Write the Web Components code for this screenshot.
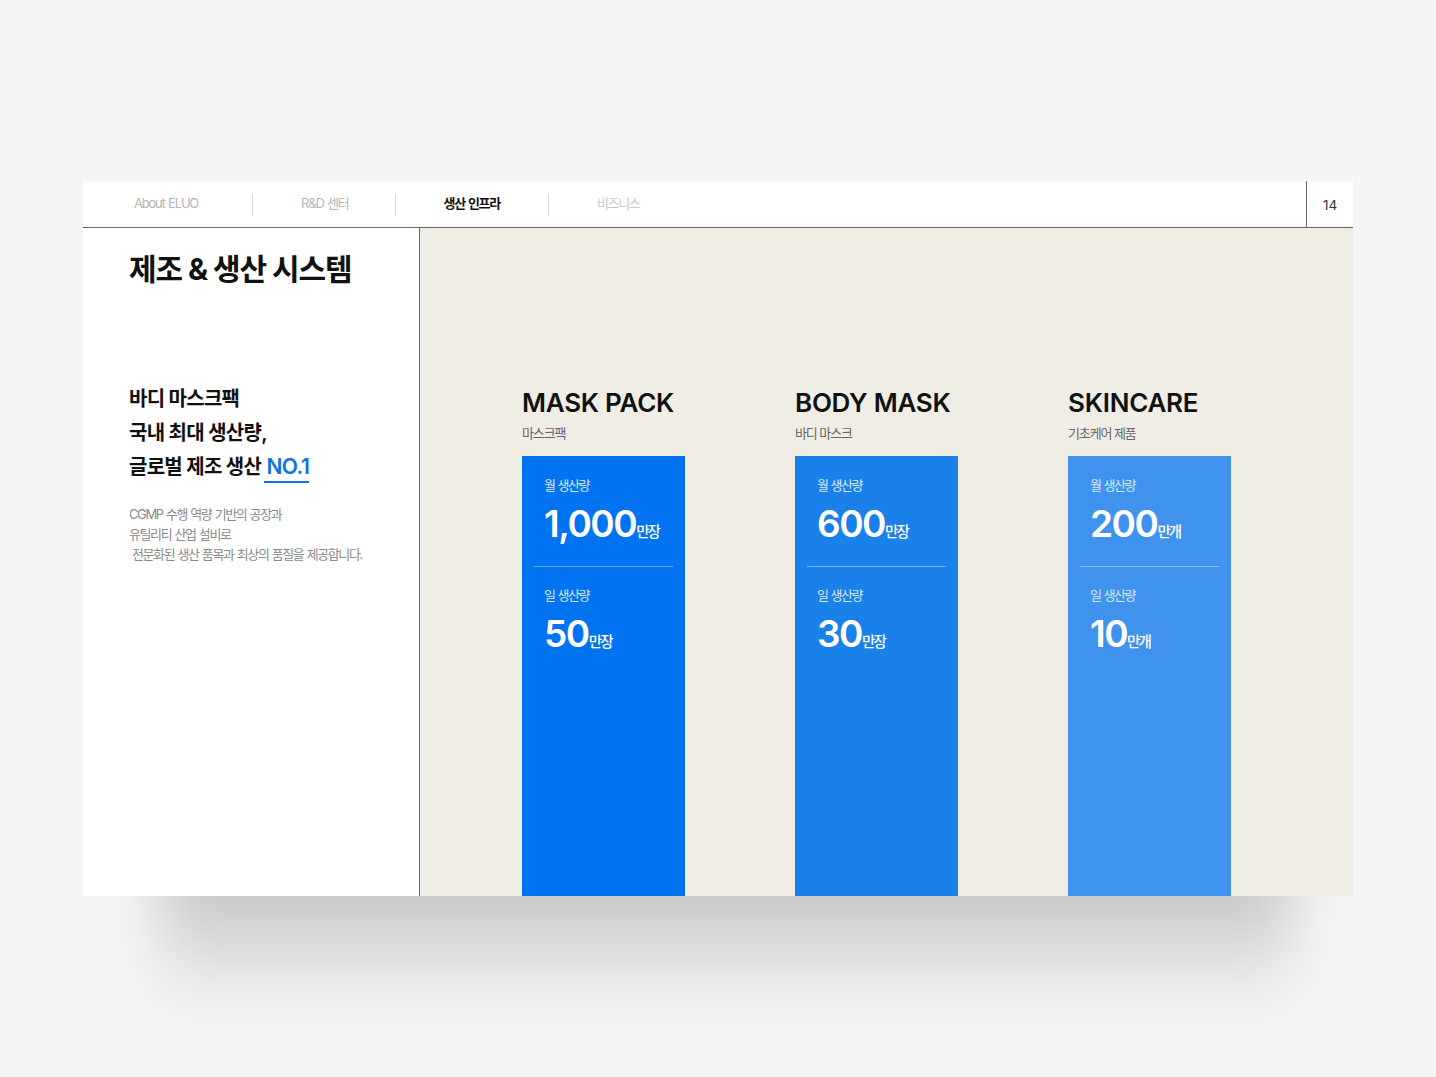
<!DOCTYPE html>
<html lang="ko">
<head>
<meta charset="utf-8">
<title>제조 & 생산 시스템</title>
<style>
  html, body { margin: 0; height: 100%; background: #f5f5f5; }
  body {
    font-family: "Inter", "Noto Sans CJK KR", sans-serif;
    padding: 181px 83px 0;
    box-sizing: border-box;
    overflow: hidden;
  }
</style>
</head>
<body>
<slide-frame>
  <top-nav slot="nav" page="14">
    <nav-item>About ELUO</nav-item>
    <nav-item>R&amp;D 센터</nav-item>
    <nav-item active>생산 인프라</nav-item>
    <nav-item last>비즈니스</nav-item>
  </top-nav>
  <intro-panel slot="left"></intro-panel>
  <product-col slot="right" name="MASK PACK" sub="마스크팩" color="#0073f0"
    month="1,000" day="50" unit="만장"></product-col>
  <product-col slot="right" name="BODY MASK" sub="바디 마스크" color="#1a80ea"
    month="600" day="30" unit="만장"></product-col>
  <product-col slot="right" name="SKINCARE" sub="기초케어 제품" color="#3f93ee"
    month="200" day="10" unit="만개"></product-col>
</slide-frame>

<script>
// slide box: nav on top, white panel left, beige panel right
class SlideFrame extends HTMLElement {
  constructor() {
    super();
    this.attachShadow({ mode: "open" });
    this.shadowRoot.innerHTML = `
    <style>
      :host { display: block; position: relative; width: 1270px; height: 715px; }
      .shadow {
        position: absolute; left: 78px; right: 62px; top: 640px; height: 190px;
        background: linear-gradient(rgba(0,0,0,.19) 36%, rgba(0,0,0,0) 100%);
        filter: blur(28px);
      }
      .box { position: relative; display: flex; flex-direction: column; height: 715px; background: #fff; }
      .main { flex: 1; display: flex; min-height: 0; }
      .left { width: 336px; border-right: 1px solid #666; box-sizing: content-box; }
      .right {
        flex: 1; background: #f0ede5; overflow: hidden;
        display: flex; gap: 110px; padding: 160px 0 0 102px;
      }
    </style>
    <div class="shadow"></div>
    <div class="box">
      <slot name="nav"></slot>
      <div class="main">
        <div class="left"><slot name="left"></slot></div>
        <div class="right"><slot name="right"></slot></div>
      </div>
    </div>`;
  }
}

class TopNav extends HTMLElement {
  constructor() {
    super();
    this.attachShadow({ mode: "open" });
    this.shadowRoot.innerHTML = `
    <style>
      :host { display: flex; height: 46px; border-bottom: 1px solid #666; background: #fff; }
      .items { flex: 1; display: flex; align-items: center; padding-left: 3px; padding-top: 2px; }
      .page {
        width: 47px; border-left: 1px solid #666;
        font-size: 13.5px; color: #333;
        display: flex; align-items: center; justify-content: center;
        padding-top: 2px; box-sizing: border-box;
      }
    </style>
    <div class="items"><slot></slot></div>
    <div class="page"></div>`;
  }
  connectedCallback() {
    this.shadowRoot.querySelector(".page").textContent = this.getAttribute("page");
  }
}

class NavItem extends HTMLElement {
  constructor() {
    super();
    this.attachShadow({ mode: "open" });
    this.shadowRoot.innerHTML = `
    <style>
      :host {
        display: block; padding: 0 48px; height: 22px; line-height: 18px;
        font-size: 13px; letter-spacing: -1.2px; word-spacing: 1px; color: #b5b5b5;
        border-right: 1px solid #dcdcdc;
      }
      :host([active]) { color: #111; font-weight: 600; letter-spacing: -1.3px; }
      :host([last]) { border-right: 0; color: #c8c8c8; letter-spacing: -1.3px; }
      :host(:first-child) { padding-right: 54px; }
      :host(:nth-child(2)) { padding-right: 46px; }
    </style>
    <slot></slot>`;
  }
}

class IntroPanel extends HTMLElement {
  constructor() {
    super();
    this.attachShadow({ mode: "open" });
    this.shadowRoot.innerHTML = `
    <style>
      :host { display: block; padding: 21px 0 0 46px; }
      h1 { margin: 0; font-size: 30px; line-height: 40px; font-weight: 700; letter-spacing: -1.1px; color: #111; }
      h2 { margin: 93px 0 0; font-size: 20px; line-height: 34px; font-weight: 600; letter-spacing: -0.75px; color: #111; }
      .no { display: inline-block; margin-left: -1px; color: #0b73e6; border-bottom: 2px solid #0b73e6; font-size: 21px; line-height: 28px; letter-spacing: -0.5px; padding-left: 2px; }
      p { margin: 19.5px 0 0; font-size: 13px; line-height: 20px; letter-spacing: -1.4px; word-spacing: 1px; color: #8a8a8a; }
      .ind { padding-left: 3px; display: block; }
    </style>
    <h1>제조 &amp; 생산 시스템</h1>
    <h2>바디 마스크팩<br>국내 최대 생산량,<br>글로벌 제조 생산 <span class="no">NO.1</span></h2>
    <p>CGMP 수행 역량 기반의 공장과<br>유틸리티 산업 설비로<br><span class="ind">전문화된 생산 품목과 최상의 품질을 제공합니다.</span></p>`;
  }
}

class StatBlock extends HTMLElement {
  constructor() {
    super();
    this.attachShadow({ mode: "open" });
    this.shadowRoot.innerHTML = `
    <style>
      :host { display: block; color: #fff; padding-left: 10px; }
      .label { font-size: 13px; line-height: 20px; letter-spacing: -1.5px; word-spacing: 1px; color: #dbeaff; }
      .row { display: flex; align-items: baseline; margin-top: 6px; }
      .num { font-size: 37px; line-height: 45px; font-weight: 600; letter-spacing: -1.5px; }
      .unit { font-size: 14.5px; font-weight: 500; letter-spacing: -1.9px; }
    </style>
    <div class="label"></div>
    <div class="row"><span class="num"></span><span class="unit"></span></div>`;
  }
  connectedCallback() {
    const s = this.shadowRoot;
    s.querySelector(".label").textContent = this.getAttribute("label");
    s.querySelector(".num").textContent = this.getAttribute("value");
    s.querySelector(".unit").textContent = this.getAttribute("unit");
  }
}

class ProductCol extends HTMLElement {
  constructor() {
    super();
    this.attachShadow({ mode: "open" });
    this.shadowRoot.innerHTML = `
    <style>
      :host { display: flex; flex-direction: column; width: 163px; height: 100%; }
      h3 { margin: 1px 0 0; font-size: 26px; line-height: 28px; font-weight: 600; letter-spacing: -0.25px; color: #111; white-space: nowrap; }
      .sub { margin-top: 6px; font-size: 13px; line-height: 20px; letter-spacing: -1.1px; color: #666; }
      .card { flex: 1; margin-top: 13px; padding: 19px 12px 0; box-sizing: border-box; }
      hr { border: 0; border-top: 1px solid rgba(255,255,255,.4); margin: 20px 0 18px; }
    </style>
    <h3></h3>
    <div class="sub"></div>
    <div class="card"></div>`;
  }
  connectedCallback() {
    const s = this.shadowRoot;
    const unit = this.getAttribute("unit");
    s.querySelector("h3").textContent = this.getAttribute("name");
    s.querySelector(".sub").textContent = this.getAttribute("sub");
    const card = s.querySelector(".card");
    card.style.background = this.getAttribute("color");
    card.innerHTML = `
      <stat-block label="월 생산량" value="${this.getAttribute("month")}" unit="${unit}"></stat-block>
      <hr>
      <stat-block label="일 생산량" value="${this.getAttribute("day")}" unit="${unit}"></stat-block>`;
  }
}

customElements.define("slide-frame", SlideFrame);
customElements.define("top-nav", TopNav);
customElements.define("nav-item", NavItem);
customElements.define("intro-panel", IntroPanel);
customElements.define("stat-block", StatBlock);
customElements.define("product-col", ProductCol);
</script>
</body>
</html>
